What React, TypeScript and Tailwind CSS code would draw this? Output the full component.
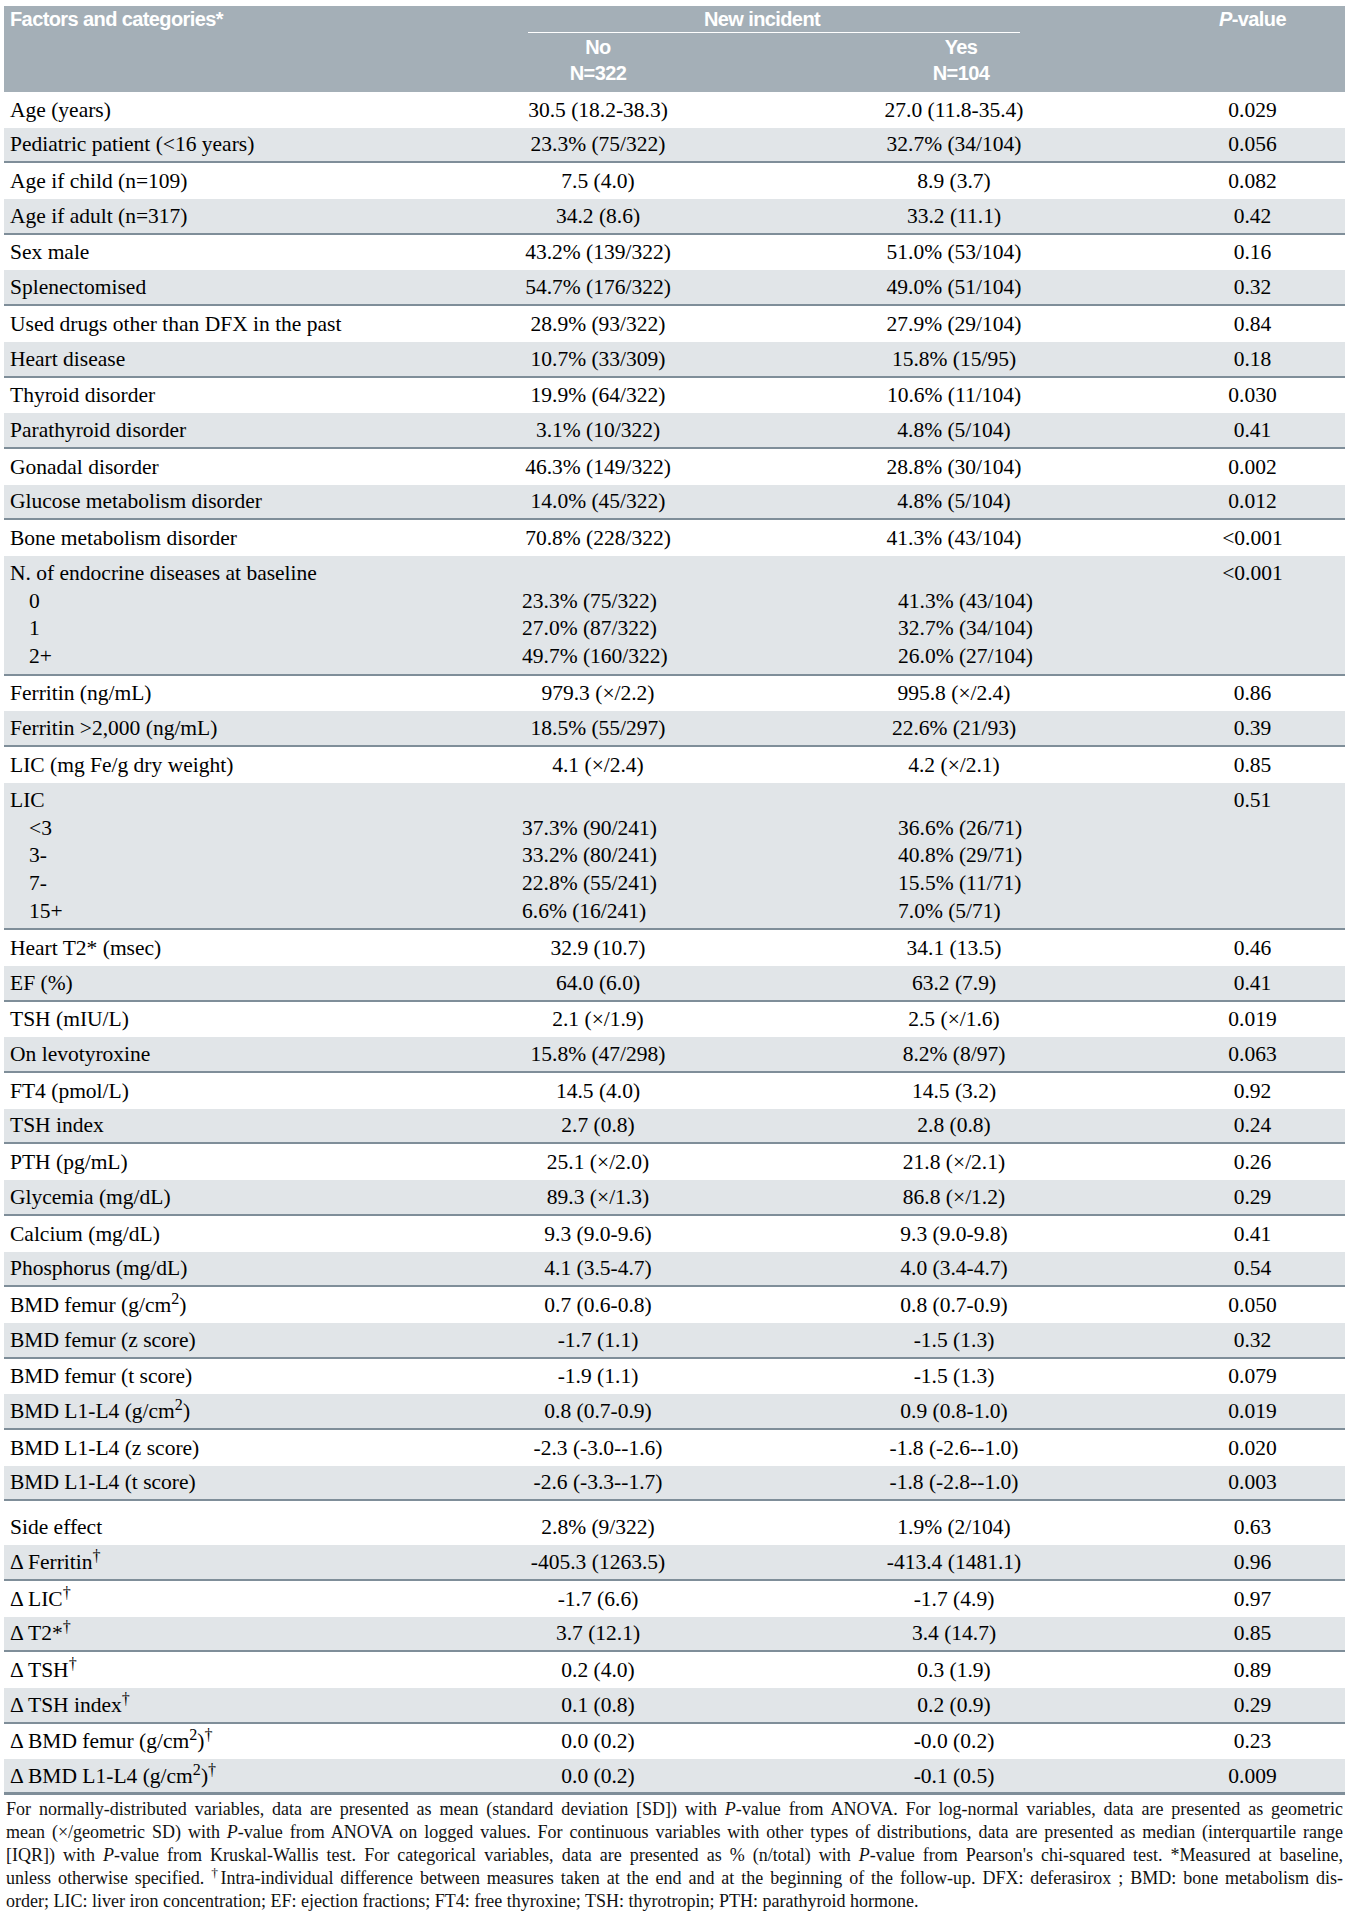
import React from 'react';

type Sub = { label: string; no: string; yes: string };

type Row = {
  label: React.ReactNode;
  no?: string;
  yes?: string;
  p: string;
  subs?: Sub[];
  tall?: boolean;
};

const sq = <sup>2</sup>;
const dag = <sup>†</sup>;

const rows: Row[] = [
  { label: 'Age (years)', no: '30.5 (18.2-38.3)', yes: '27.0 (11.8-35.4)', p: '0.029' },
  { label: 'Pediatric patient (<16 years)', no: '23.3% (75/322)', yes: '32.7% (34/104)', p: '0.056' },
  { label: 'Age if child (n=109)', no: '7.5 (4.0)', yes: '8.9 (3.7)', p: '0.082' },
  { label: 'Age if adult (n=317)', no: '34.2 (8.6)', yes: '33.2 (11.1)', p: '0.42' },
  { label: 'Sex male', no: '43.2% (139/322)', yes: '51.0% (53/104)', p: '0.16' },
  { label: 'Splenectomised', no: '54.7% (176/322)', yes: '49.0% (51/104)', p: '0.32' },
  { label: 'Used drugs other than DFX in the past', no: '28.9% (93/322)', yes: '27.9% (29/104)', p: '0.84' },
  { label: 'Heart disease', no: '10.7% (33/309)', yes: '15.8% (15/95)', p: '0.18' },
  { label: 'Thyroid disorder', no: '19.9% (64/322)', yes: '10.6% (11/104)', p: '0.030' },
  { label: 'Parathyroid disorder', no: '3.1% (10/322)', yes: '4.8% (5/104)', p: '0.41' },
  { label: 'Gonadal disorder', no: '46.3% (149/322)', yes: '28.8% (30/104)', p: '0.002' },
  { label: 'Glucose metabolism disorder', no: '14.0% (45/322)', yes: '4.8% (5/104)', p: '0.012' },
  { label: 'Bone metabolism disorder', no: '70.8% (228/322)', yes: '41.3% (43/104)', p: '<0.001' },
  {
    label: 'N. of endocrine diseases at baseline',
    p: '<0.001',
    subs: [
      { label: '0', no: '23.3% (75/322)', yes: '41.3% (43/104)' },
      { label: '1', no: '27.0% (87/322)', yes: '32.7% (34/104)' },
      { label: '2+', no: '49.7% (160/322)', yes: '26.0% (27/104)' },
    ],
  },
  { label: 'Ferritin (ng/mL)', no: '979.3 (×/2.2)', yes: '995.8 (×/2.4)', p: '0.86' },
  { label: 'Ferritin >2,000 (ng/mL)', no: '18.5% (55/297)', yes: '22.6% (21/93)', p: '0.39' },
  { label: 'LIC (mg Fe/g dry weight)', no: '4.1 (×/2.4)', yes: '4.2 (×/2.1)', p: '0.85' },
  {
    label: 'LIC',
    p: '0.51',
    subs: [
      { label: '<3', no: '37.3% (90/241)', yes: '36.6% (26/71)' },
      { label: '3-', no: '33.2% (80/241)', yes: '40.8% (29/71)' },
      { label: '7-', no: '22.8% (55/241)', yes: '15.5% (11/71)' },
      { label: '15+', no: '6.6% (16/241)', yes: '7.0% (5/71)' },
    ],
  },
  { label: 'Heart T2* (msec)', no: '32.9 (10.7)', yes: '34.1 (13.5)', p: '0.46' },
  { label: 'EF (%)', no: '64.0 (6.0)', yes: '63.2 (7.9)', p: '0.41' },
  { label: 'TSH (mIU/L)', no: '2.1 (×/1.9)', yes: '2.5 (×/1.6)', p: '0.019' },
  { label: 'On levotyroxine', no: '15.8% (47/298)', yes: '8.2% (8/97)', p: '0.063' },
  { label: 'FT4 (pmol/L)', no: '14.5 (4.0)', yes: '14.5 (3.2)', p: '0.92' },
  { label: 'TSH index', no: '2.7 (0.8)', yes: '2.8 (0.8)', p: '0.24' },
  { label: 'PTH (pg/mL)', no: '25.1 (×/2.0)', yes: '21.8 (×/2.1)', p: '0.26' },
  { label: 'Glycemia (mg/dL)', no: '89.3 (×/1.3)', yes: '86.8 (×/1.2)', p: '0.29' },
  { label: 'Calcium (mg/dL)', no: '9.3 (9.0-9.6)', yes: '9.3 (9.0-9.8)', p: '0.41' },
  { label: 'Phosphorus (mg/dL)', no: '4.1 (3.5-4.7)', yes: '4.0 (3.4-4.7)', p: '0.54' },
  { label: <>BMD femur (g/cm{sq})</>, no: '0.7 (0.6-0.8)', yes: '0.8 (0.7-0.9)', p: '0.050' },
  { label: 'BMD femur (z score)', no: '-1.7 (1.1)', yes: '-1.5 (1.3)', p: '0.32' },
  { label: 'BMD femur (t score)', no: '-1.9 (1.1)', yes: '-1.5 (1.3)', p: '0.079' },
  { label: <>BMD L1-L4 (g/cm{sq})</>, no: '0.8 (0.7-0.9)', yes: '0.9 (0.8-1.0)', p: '0.019' },
  { label: 'BMD L1-L4 (z score)', no: '-2.3 (-3.0--1.6)', yes: '-1.8 (-2.6--1.0)', p: '0.020' },
  { label: 'BMD L1-L4 (t score)', no: '-2.6 (-3.3--1.7)', yes: '-1.8 (-2.8--1.0)', p: '0.003' },
  { label: 'Side effect', no: '2.8% (9/322)', yes: '1.9% (2/104)', p: '0.63', tall: true },
  { label: <>Δ Ferritin{dag}</>, no: '-405.3 (1263.5)', yes: '-413.4 (1481.1)', p: '0.96' },
  { label: <>Δ LIC{dag}</>, no: '-1.7 (6.6)', yes: '-1.7 (4.9)', p: '0.97' },
  { label: <>Δ T2*{dag}</>, no: '3.7 (12.1)', yes: '3.4 (14.7)', p: '0.85' },
  { label: <>Δ TSH{dag}</>, no: '0.2 (4.0)', yes: '0.3 (1.9)', p: '0.89' },
  { label: <>Δ TSH index{dag}</>, no: '0.1 (0.8)', yes: '0.2 (0.9)', p: '0.29' },
  { label: <>Δ BMD femur (g/cm{sq}){dag}</>, no: '0.0 (0.2)', yes: '-0.0 (0.2)', p: '0.23' },
  { label: <>Δ BMD L1-L4 (g/cm{sq}){dag}</>, no: '0.0 (0.2)', yes: '-0.1 (0.5)', p: '0.009' },
];

function TableRow({ row, index, last }: { row: Row; index: number; last: boolean }) {
  const grey = index % 2 === 1;
  const bg = grey ? 'bg-[#e1e5e8]' : 'bg-white';
  const border = last
    ? 'border-b-[3px] border-[#7f8e99]'
    : grey
      ? 'border-b-2 border-[#7f8e99]'
      : '';

  if (row.subs) {
    return (
      <div className={`grid grid-cols-[444px_300px_412px_1fr] pt-[4px] pb-[3px] leading-[27.7px] whitespace-nowrap ${bg} ${border}`}>
        <div className="pl-[6px]">
          <div>{row.label}</div>
          {row.subs.map((s) => (
            <div key={s.label} className="pl-[19px]">{s.label}</div>
          ))}
        </div>
        <div className="pl-[74px]">
          <div>&nbsp;</div>
          {row.subs.map((s) => (
            <div key={s.label}>{s.no}</div>
          ))}
        </div>
        <div className="pl-[150px]">
          <div>&nbsp;</div>
          {row.subs.map((s) => (
            <div key={s.label}>{s.yes}</div>
          ))}
        </div>
        <div className="text-center">{row.p}</div>
      </div>
    );
  }

  return (
    <div
      className={`grid grid-cols-[444px_300px_412px_1fr] items-center whitespace-nowrap ${row.tall ? 'h-[44px] pt-[8px]' : 'h-[35.7px]'} ${bg} ${border}`}
    >
      <div className="pl-[6px]">{row.label}</div>
      <div className="text-center">{row.no}</div>
      <div className="text-center">{row.yes}</div>
      <div className="text-center">{row.p}</div>
    </div>
  );
}

export default function App() {
  return (
    <div className="min-h-[1913px] bg-white pt-[6px] px-[4px] text-black font-['Liberation_Serif',serif]">
      {/* header */}
      <div className="grid grid-cols-[444px_300px_412px_1fr] h-[86px] bg-[#a4afb7] text-white font-bold text-[20px] font-['Liberation_Sans_Narrow','Liberation_Sans',sans-serif] tracking-[-0.6px]">
        <div className="pl-[6px] h-[27px] leading-[27px]">Factors and categories*</div>
        <div className="col-span-2 flex flex-col">
          <div className="ml-[80px] mr-[140px] pr-[24px] h-[27px] leading-[27px] text-center border-b border-white">
            New incident
          </div>
          <div className="grid grid-cols-[300px_412px] pt-[2px] leading-[25.5px] text-center">
            <div>
              <div>No</div>
              <div>N=322</div>
            </div>
            <div className="pl-[14px]">
              <div>Yes</div>
              <div>N=104</div>
            </div>
          </div>
        </div>
        <div className="h-[27px] leading-[27px] text-center">
          <i>P</i>-value
        </div>
      </div>

      {/* body */}
      <div className="text-[21.5px]">
        {rows.map((r, i) => (
          <TableRow key={i} row={r} index={i} last={i === rows.length - 1} />
        ))}
      </div>

      {/* footnote */}
      <div className="pt-[3px] px-[2px] text-[18px] leading-[23px] text-[#111] whitespace-nowrap">
        <div className="text-justify [text-align-last:justify]">
          For normally-distributed variables, data are presented as mean (standard deviation [SD]) with <i>P</i>-value from ANOVA. For log-normal variables, data are presented as geometric
        </div>
        <div className="text-justify [text-align-last:justify]">
          mean (×/geometric SD) with <i>P</i>-value from ANOVA on logged values. For continuous variables with other types of distributions, data are presented as median (interquartile range
        </div>
        <div className="text-justify [text-align-last:justify]">
          [IQR]) with <i>P</i>-value from Kruskal-Wallis test. For categorical variables, data are presented as % (n/total) with <i>P</i>-value from Pearson's chi-squared test. *Measured at baseline,
        </div>
        <div className="text-justify [text-align-last:justify]">
          unless otherwise specified. <sup>†</sup>Intra-individual difference between measures taken at the end and at the beginning of the follow-up. DFX: deferasirox ; BMD: bone metabolism dis-
        </div>
        <div>
          order; LIC: liver iron concentration; EF: ejection fractions; FT4: free thyroxine; TSH: thyrotropin; PTH: parathyroid hormone.
        </div>
      </div>
    </div>
  );
}
